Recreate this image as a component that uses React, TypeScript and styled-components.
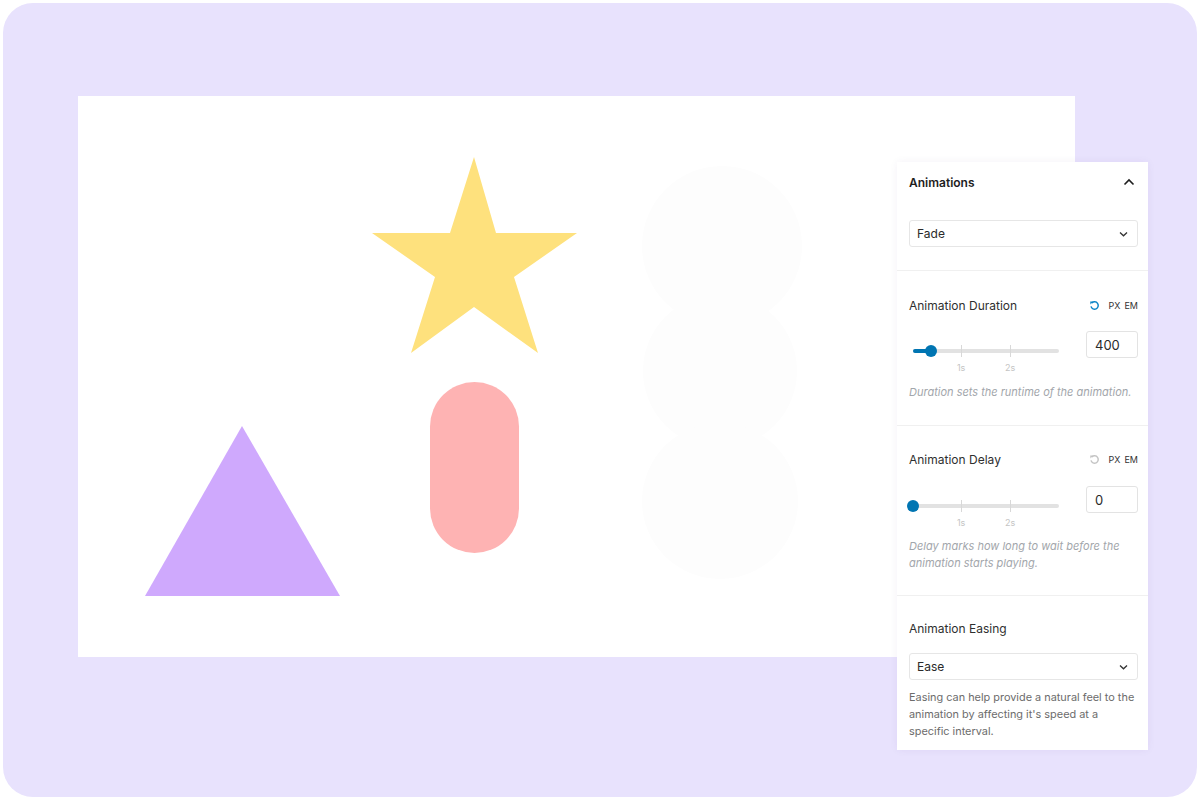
import React from "react";
import styled, { createGlobalStyle } from "styled-components";

const Global = createGlobalStyle`
  html, body { margin: 0; padding: 0; background: #ffffff; }
  body { font-family: Inter, "Noto Sans", "Liberation Sans", sans-serif; -webkit-font-smoothing: antialiased; }
  * { box-sizing: border-box; }
`;

const Frame = styled.div`
  position: relative;
  margin: 3px;
  width: 1194px;
  height: 794px;
  border-radius: 30px;
  background: #e8e2fd;
  padding: 93px 0 0 75px;
`;

const Canvas = styled.div`
  position: relative;
  width: 997px;
  height: 561px;
  background: #ffffff;
  overflow: hidden;
`;

const ShapeSvg = styled.svg`
  position: absolute;
  left: 0;
  top: 0;
  width: 997px;
  height: 561px;
`;

const Panel = styled.div`
  position: absolute;
  left: 894px;
  top: 159px;
  width: 251px;
  height: 588px;
  background: #ffffff;
  box-shadow: 0 0 8px rgba(60, 40, 120, 0.06);
  display: flex;
  flex-direction: column;
`;

const Section = styled.div<{ $pt: number; $pb: number; $last?: boolean }>`
  padding: ${(p) => p.$pt}px 10px ${(p) => p.$pb}px 12px;
  border-bottom: ${(p) => (p.$last ? "none" : "1px solid #f0f0f0")};
`;

const HeaderRow = styled.div`
  height: 40px;
  display: flex;
  align-items: center;
  justify-content: space-between;
  padding-right: 3px;
`;

const Title = styled.div`
  font-size: 12px;
  font-weight: 600;
  color: #1e1e1e;
`;

const LabelRow = styled.div`
  height: 16px;
  display: flex;
  align-items: center;
  justify-content: space-between;
`;

const Label = styled.div`
  font-size: 12px;
  color: #2f2f2f;
`;

const Units = styled.div`
  display: flex;
  align-items: center;
  gap: 6px;
  font-size: 9px;
  color: #333;
`;

const UnitGroup = styled.div`
  display: flex;
  gap: 4px;
  margin-left: 3px;
`;

const Select = styled.div<{ $mt: number }>`
  margin-top: ${(p) => p.$mt}px;
  height: 27px;
  border: 1px solid #e6e6e6;
  border-radius: 3px;
  display: flex;
  align-items: center;
  justify-content: space-between;
  padding: 0 9px 0 7px;
  font-size: 12px;
  color: #2a2a2a;
`;

const SliderRow = styled.div<{ $mt: number }>`
  margin-top: ${(p) => p.$mt}px;
  display: flex;
  justify-content: space-between;
  align-items: flex-start;
`;

const SliderBlock = styled.div`
  width: 146px;
  margin-left: 4px;
  padding-top: 18px;
`;

const Track = styled.div`
  position: relative;
  height: 4px;
  border-radius: 2px;
  background: #e2e2e2;
`;

const Fill = styled.div`
  position: absolute;
  left: 0;
  top: 0;
  height: 4px;
  border-radius: 2px;
  background: #0075b2;
`;

const Thumb = styled.div`
  position: absolute;
  top: -4px;
  width: 12px;
  height: 12px;
  margin-left: -6px;
  border-radius: 50%;
  background: #0075b2;
`;

const Tick = styled.div`
  position: absolute;
  top: -4px;
  width: 1px;
  height: 12px;
  background: #d8d8d8;
`;

const TickLabels = styled.div`
  position: relative;
  height: 12px;
  margin-top: 9px;
`;

const TickLabel = styled.span`
  position: absolute;
  top: 0;
  transform: translateX(-50%);
  font-size: 9px;
  line-height: 12px;
  color: #c4c4c4;
`;

const NumberBox = styled.div`
  width: 52px;
  height: 27px;
  border: 1px solid #e3e3e3;
  border-radius: 3px;
  display: flex;
  align-items: center;
  padding-left: 8px;
  font-size: 13px;
  color: #2a2a2a;
`;

const Help = styled.div<{ $mt: number; $italic?: boolean }>`
  margin-top: ${(p) => p.$mt}px;
  font-size: ${(p) => (p.$italic ? "11px" : "10.9px")};
  line-height: 17px;
  font-style: ${(p) => (p.$italic ? "italic" : "normal")};
  color: ${(p) => (p.$italic ? "#a2a6ab" : "#6c6c6c")};
`;

const ChevronUp = () => (
  <svg width="12" height="8" viewBox="0 0 12 8" fill="none">
    <path d="M1.5 6.5 L6 2 L10.5 6.5" stroke="#1e1e1e" strokeWidth="1.6" />
  </svg>
);

const ChevronDown = () => (
  <svg width="9" height="6" viewBox="0 0 9 6" fill="none">
    <path d="M1 1.5 L4.5 4.8 L8 1.5" stroke="#333" strokeWidth="1.3" />
  </svg>
);

const Reset = ({ color }: { color: string }) => (
  <svg width="11" height="11" viewBox="0 0 12 12" fill="none">
    <path d="M3.2 3.2 A4 4 0 1 1 2.2 7" stroke={color} strokeWidth="1.6" fill="none" />
    <path d="M1.3 1.6 L4.6 1.6 L1.6 4.8 Z" fill={color} />
  </svg>
);

const Slider = ({ pct, fill }: { pct: number; fill: boolean }) => (
  <SliderBlock>
    <Track>
      {fill && <Fill style={{ width: `${pct}%` }} />}
      <Tick style={{ left: "33%" }} />
      <Tick style={{ left: "66.5%" }} />
      <Thumb style={{ left: `${pct}%` }} />
    </Track>
    <TickLabels>
      <TickLabel style={{ left: "33%" }}>1s</TickLabel>
      <TickLabel style={{ left: "66.5%" }}>2s</TickLabel>
    </TickLabels>
  </SliderBlock>
);

export default function App() {
  return (
    <>
      <Global />
      <Frame>
        <Canvas>
          <ShapeSvg viewBox="0 0 997 561">
            <g fill="#fdfdfd">
              <circle cx="644" cy="150" r="80" />
              <circle cx="642" cy="275" r="77" />
              <circle cx="642" cy="405" r="78" />
            </g>
            <polygon
              fill="#fee17d"
              points="396,61 418,137 499,137 436,181 460,257 396,211 333,257 357,181 294,137 372,137"
            />
            <polygon fill="#cfa9fd" points="164,330 262,500 67,500" />
            <rect x="352" y="286" width="89" height="171" rx="44.5" fill="#feb3b3" />
          </ShapeSvg>
        </Canvas>
        <Panel>
          <Section $pt={0} $pb={23}>
            <HeaderRow>
              <Title>Animations</Title>
              <ChevronUp />
            </HeaderRow>
            <Select $mt={18}>
              <span>Fade</span>
              <ChevronDown />
            </Select>
          </Section>
          <Section $pt={26} $pb={24}>
            <LabelRow>
              <Label>Animation Duration</Label>
              <Units>
                <Reset color="#0a84c6" />
                <UnitGroup>
                  <span>PX</span>
                  <span>EM</span>
                </UnitGroup>
              </Units>
            </LabelRow>
            <SliderRow $mt={18}>
              <Slider pct={12.5} fill />
              <NumberBox>400</NumberBox>
            </SliderRow>
            <Help $mt={10} $italic>
              Duration sets the runtime of the animation.
            </Help>
          </Section>
          <Section $pt={25} $pb={23}>
            <LabelRow>
              <Label>Animation Delay</Label>
              <Units>
                <Reset color="#c4c4c4" />
                <UnitGroup>
                  <span>PX</span>
                  <span>EM</span>
                </UnitGroup>
              </Units>
            </LabelRow>
            <SliderRow $mt={19}>
              <Slider pct={0} fill={false} />
              <NumberBox>0</NumberBox>
            </SliderRow>
            <Help $mt={9} $italic>
              Delay marks how long to wait before the animation starts playing.
            </Help>
          </Section>
          <Section $pt={24} $pb={10} $last>
            <LabelRow>
              <Label>Animation Easing</Label>
            </LabelRow>
            <Select $mt={17}>
              <span>Ease</span>
              <ChevronDown />
            </Select>
            <Help $mt={9}>
              Easing can help provide a natural feel to the animation by affecting it's speed at a specific interval.
            </Help>
          </Section>
        </Panel>
      </Frame>
    </>
  );
}
